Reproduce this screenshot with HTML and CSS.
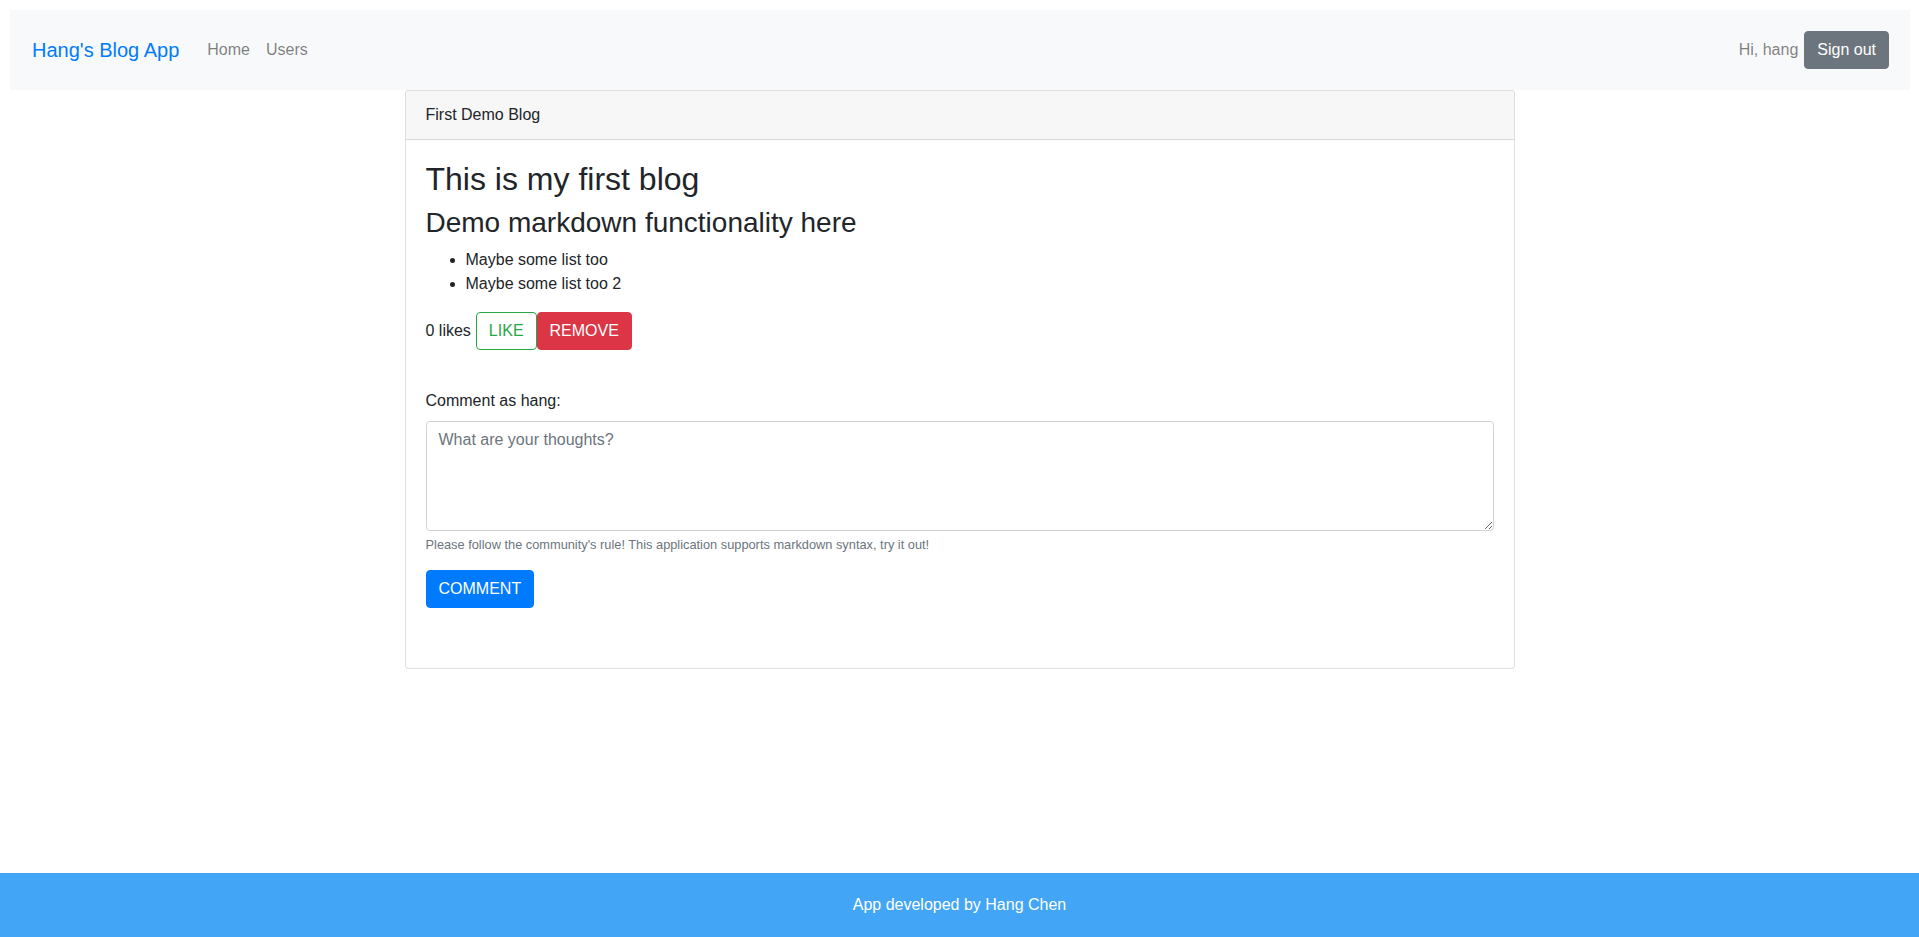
FILE: index.html
```
<!DOCTYPE html>
<html lang="en">
<head>
<meta charset="utf-8">
<title>Hang's Blog App</title>
<link rel="stylesheet" href="styles.css">
</head>
<body>
<div class="page">
  <header class="nav-wrap">
    <nav class="navbar">
      <a class="brand" href="#">Hang's Blog App</a>
      <ul class="nav-links">
        <li><a class="nav-link" href="#">Home</a></li>
        <li><a class="nav-link" href="#">Users</a></li>
      </ul>
      <div class="nav-right">
        <span class="greeting">Hi, hang</span>
        <button class="btn btn-secondary" type="button">Sign out</button>
      </div>
    </nav>
  </header>
  <main class="container">
    <div class="card">
      <div class="card-header">First Demo Blog</div>
      <div class="card-body">
        <h2 class="post-title">This is my first blog</h2>
        <h3 class="post-sub">Demo markdown functionality here</h3>
        <ul class="post-list">
          <li>Maybe some list too</li>
          <li>Maybe some list too 2</li>
        </ul>
        <div class="likes">
          <span class="likes-count">0 likes</span>
          <button class="btn btn-outline-success" type="button">LIKE</button><button class="btn btn-danger" type="button">REMOVE</button>
        </div>
        <form class="comment-form">
          <label class="comment-label" for="comment">Comment as hang:</label>
          <textarea id="comment" class="form-control" rows="4" placeholder="What are your thoughts?"></textarea>
          <small class="form-text">Please follow the community's rule! This application supports markdown syntax, try it out!</small>
          <button class="btn btn-primary comment-btn" type="button">COMMENT</button>
        </form>
      </div>
    </div>
  </main>
  <footer class="footer">App developed by Hang Chen</footer>
</div>
</body>
</html>
```

FILE: styles.css
```
* { box-sizing: border-box; }

html, body {
  margin: 0;
  padding: 0;
}

body {
  font-family: "Liberation Sans", Arial, sans-serif;
  font-size: 16px;
  line-height: 1.5;
  color: #212529;
  background: #fff;
}

.page {
  min-height: 100vh;
  display: flex;
  flex-direction: column;
}

.nav-wrap {
  padding: 10px 9px 0 10px;
}

.navbar {
  display: flex;
  align-items: center;
  height: 80px;
  padding: 0 21px 0 22px;
  background: #f8f9fa;
}

.brand {
  font-size: 20px;
  line-height: 30px;
  color: #007bff;
  text-decoration: none;
  margin-right: 20px;
}

.nav-links {
  display: flex;
  list-style: none;
  margin: 0;
  padding: 0;
}

.nav-link {
  display: block;
  padding: 8px;
  color: rgba(0, 0, 0, 0.5);
  text-decoration: none;
}

.nav-right {
  margin-left: auto;
  display: flex;
  align-items: center;
  gap: 6px;
}

.greeting {
  color: rgba(0, 0, 0, 0.5);
}

.btn {
  display: inline-block;
  font-family: inherit;
  font-size: 16px;
  line-height: 24px;
  padding: 6px 12px;
  border: 1px solid transparent;
  border-radius: 4px;
  cursor: pointer;
  vertical-align: middle;
}

.btn-secondary {
  background: #6c757d;
  border-color: #6c757d;
  color: #fff;
}

.btn-outline-success {
  background: transparent;
  border-color: #28a745;
  color: #28a745;
}

.btn-danger {
  background: #dc3545;
  border-color: #dc3545;
  color: #fff;
}

.btn-primary {
  background: #007bff;
  border-color: #007bff;
  color: #fff;
}

.container {
  flex: 1;
  width: 1110px;
  margin: 0 auto;
}

.card {
  border: 1px solid rgba(0, 0, 0, 0.125);
  border-radius: 4px;
  background: #fff;
}

.card-header {
  padding: 12px 20px;
  background: rgba(0, 0, 0, 0.03);
  border-bottom: 1px solid rgba(0, 0, 0, 0.125);
  border-radius: 3px 3px 0 0;
}

.card-body {
  padding: 20px;
}

.post-title {
  font-size: 32px;
  font-weight: 400;
  line-height: 1.2;
  margin: 0 0 8px;
}

.post-sub {
  font-size: 28px;
  font-weight: 400;
  line-height: 1.2;
  margin: 0 0 8px;
}

.post-list {
  margin: 0 0 16px;
  padding-left: 40px;
}

.likes {
  display: flex;
  align-items: center;
}

.likes-count {
  margin-right: 5px;
}

.comment-form {
  margin-top: 39px;
  margin-bottom: 40px;
}

.comment-label {
  display: block;
  margin-bottom: 8px;
}

.form-control {
  display: block;
  width: 100%;
  height: 110px;
  padding: 6px 12px;
  font-family: inherit;
  font-size: 16px;
  line-height: 24px;
  color: #495057;
  border: 1px solid #ced4da;
  border-radius: 4px;
  resize: vertical;
}

.form-control::placeholder {
  color: #6c757d;
  opacity: 1;
}

.form-text {
  display: block;
  margin-top: 4px;
  font-size: 12.8px;
  line-height: 19.2px;
  color: #6c757d;
}

.comment-btn {
  margin-top: 16px;
}

.footer {
  height: 64px;
  display: flex;
  align-items: center;
  justify-content: center;
  background: #42a5f5;
  color: #fff;
}
```
